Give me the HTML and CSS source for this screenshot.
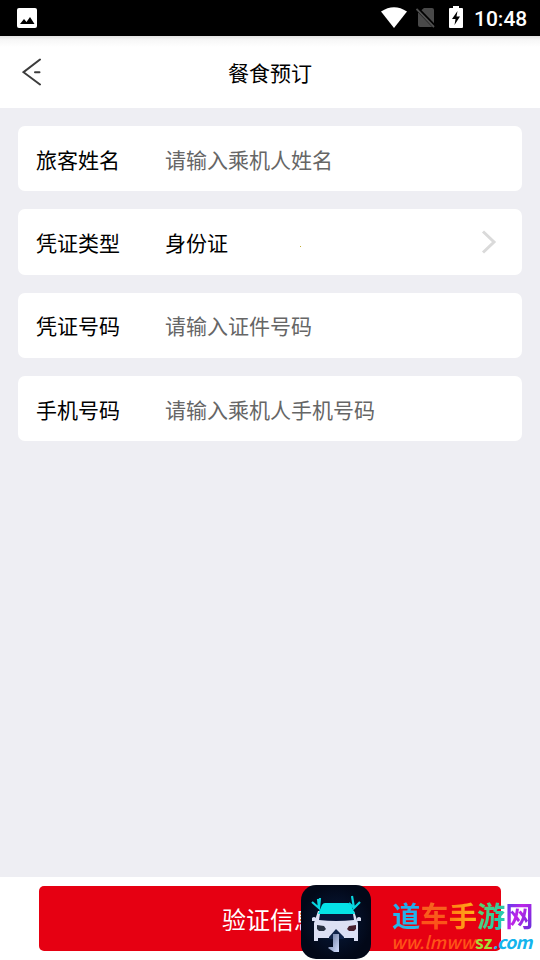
FILE: index.html
```html
<!DOCTYPE html>
<html lang="zh-CN">
<head>
<meta charset="utf-8">
<title>餐食预订</title>
<link rel="stylesheet" href="styles.css">
</head>
<body>
<div class="screen">
  <div class="status">
    <svg class="photo" width="20" height="20" viewBox="0 0 20 20"><rect width="20" height="20" rx="2" fill="#fff"/><path d="M3 16l4-5 2.500 3 3.500-5 4.500 7z" fill="#000"/></svg>
    <svg class="wifi" width="26" height="21" viewBox="0 0 26 21"><path d="M0 4.500Q13-4 26 4.500L13 21z" fill="#fff"/></svg>
    <svg class="sim" width="20" height="21" viewBox="0 0 20 21"><path d="M8 1h8q2 0 2 2v16q0 1-1 1H4q-2 0-2-2V6z" fill="#494949"/><path d="M1 1.500L19 20" stroke="#000" stroke-width="4"/><path d="M.5 2L18 20" stroke="#505050" stroke-width="1.800"/></svg>
    <svg class="battery" width="14" height="22" viewBox="0 0 14 22"><path d="M4 0h6v2h3q1 0 1 1v18q0 1-1 1H1q-1 0-1-1V3q0-1 1-1h3z" fill="#fff"/><path d="M8.500 5L3 13h3.500L5.500 19 11 10.500H7.500z" fill="#000"/></svg>
    <span class="time">10:48</span>
  </div>
  <header class="header">
    <svg class="back" width="20" height="30" viewBox="0 0 20 30" fill="none" stroke="#3c3c3c" stroke-width="2" stroke-linecap="round"><path d="M18 2.500L1.500 15.200 18 27.500M13 15.200h4.500"/></svg>
    <h1>餐食预订</h1>
  </header>
  <main class="form">
    <div class="row"><span class="label">旅客姓名</span><span class="hint">请输入乘机人姓名</span></div>
    <div class="row row-select"><span class="label">凭证类型</span><span class="value">身份证</span><i class="dot"></i>
      <svg class="chevron" width="16" height="24" viewBox="0 0 16 24" fill="none" stroke="#dadada" stroke-width="3"><path d="M2 1.500L13 12 2 22.500"/></svg></div>
    <div class="row"><span class="label">凭证号码</span><span class="hint">请输入证件号码</span></div>
    <div class="row"><span class="label">手机号码</span><span class="hint">请输入乘机人手机号码</span></div>
  </main>
  <footer class="footer"><div class="submit">验证信息</div></footer>
  <svg class="logo" width="70" height="74" viewBox="0 0 70 74">
    <defs>
      <linearGradient id="arrow" x2="1" y2="1"><stop stop-color="#5b6c94"/><stop offset="1" stop-color="#d4e0ff"/></linearGradient>
      <radialGradient id="night"><stop stop-color="#081b3d"/><stop offset="1" stop-color="#020818"/></radialGradient>
    </defs>
    <rect width="70" height="74" rx="15" fill="url(#night)"/>
    <path d="M17 26h36l3 9 1 3v18h-4v-3H17v3h-4V38l1-3z" fill="#dce0f4"/>
    <path d="M11 33q2-2 4 0v3h-4zM56 33q2-2 4 0v3h-4z" fill="#dce0f4"/>
    <path d="M21 20q1-2 3-2h23q2 0 3 2l4 9H17z" fill="#05e2e7"/>
    <path d="M19 29h33l1 6q-18 2-35 0z" fill="#06143a"/>
    <path d="M16 40l7 1 2 3-2 2h-5l-2-2z" fill="#283041"/><path d="M55 40l-7 1-2 3 2 2h5l2-2z" fill="#48202e"/>
    <path d="M35 44l-7 8v2h15v-2z" fill="#10234a"/>
    <path d="M32 49h6v18h-5l-6-4 1-1h4z" fill="url(#arrow)"/>
    <path d="M11 17l7 6 1-10M17 14l1 9M51 11l2 12 6-6M48 18l5 5" fill="none" stroke="#08d5df" stroke-width="2.200"/>
  </svg>
  <div class="mark">
    <div class="mark-name"><span class="c1">道</span><span class="c2">车</span><span class="c3">手</span><span class="c4">游</span><span class="c5">网</span></div>
    <div class="mark-url"><span class="u1">ww.lmww</span><span class="u2">sz</span><span class="u3">.com</span></div>
  </div>
</div>
</body>
</html>
```
FILE: styles.css
```css
* { box-sizing: border-box; }
body { margin: 0; font-family: "Noto Sans CJK SC", sans-serif; color: #000; }
.screen { position: relative; width: 540px; height: 960px; display: flex; flex-direction: column; background: #eeeef3; overflow: hidden; }
.status { height: 36px; flex: none; background: #000; display: flex; align-items: center; padding: 0 12px 0 17px; }
.wifi { margin-left: auto; margin-top: -2px; }
.sim { margin-left: 9px; margin-top: -1px; }
.battery { margin-left: 13px; margin-top: -2px; }
.time { width: 54px; margin-left: 11px; color: #fff; font: 500 21px/36px Roboto, sans-serif; white-space: nowrap; padding-top: 2px; }
.header { height: 72px; flex: none; display: grid; grid-template-columns: 60px 1fr 60px; align-items: center; background: linear-gradient(#e2e2e2, #f7f7f7 4px, #fff 11px); }
.back { margin-left: 22px; }
.header h1 { margin: 0; font-size: 21px; line-height: 30px; font-weight: 400; text-align: center; }
.form { flex: 1; padding: 18px; display: flex; flex-direction: column; gap: 18px; }
.row { height: 65.3px; flex: none; display: flex; align-items: center; padding: 0 25px 0 18px; background: #fff; border-radius: 7px; font-size: 21px; line-height: 30px; }
.label { width: 129px; }
.hint { color: #666; }
.dot { width: 1px; height: 1px; background: #c4ae35; margin: 9px 0 0 72px; }
.chevron { margin-left: auto; }
.footer { height: 83px; flex: none; background: #fff; padding: 9px 39px; }
.submit { height: 65px; background: #e60012; border-radius: 5px; color: #fff; font-size: 24px; line-height: 66px; text-align: center; }
.logo { position: absolute; left: 301px; top: 885px; }
.mark { position: absolute; left: 392px; top: 895px; width: 146px; }
.mark-name { display: flex; font-size: 28.300px; line-height: 40px; font-weight: 700; }
.mark-name span { color: transparent; background-clip: text; -webkit-background-clip: text; }
.c1 { background-image: linear-gradient(#20a8ef, #29bce5); }
.c2 { background-image: linear-gradient(#f36b21, #ff4b16); }
.c3 { background-image: linear-gradient(90deg, #ff7b13, #ffb51b); }
.c4 { background-image: linear-gradient(110deg, #69d75b, #12c4c7); }
.c5 { background-image: linear-gradient(120deg, #3148ef, #bd24e8 45%, #5131d8); }
.mark-url { display: flex; font: italic 700 17.500px/18px "Noto Sans CJK SC", sans-serif; white-space: nowrap; margin-left: -1px; margin-top: -2px; }
.u1 { color: #ff5418; font-weight: 500; }
.u2 { color: #a2df38; font-style: normal; }
.u3 { color: #14b4ed; letter-spacing: -.7px; }
```
